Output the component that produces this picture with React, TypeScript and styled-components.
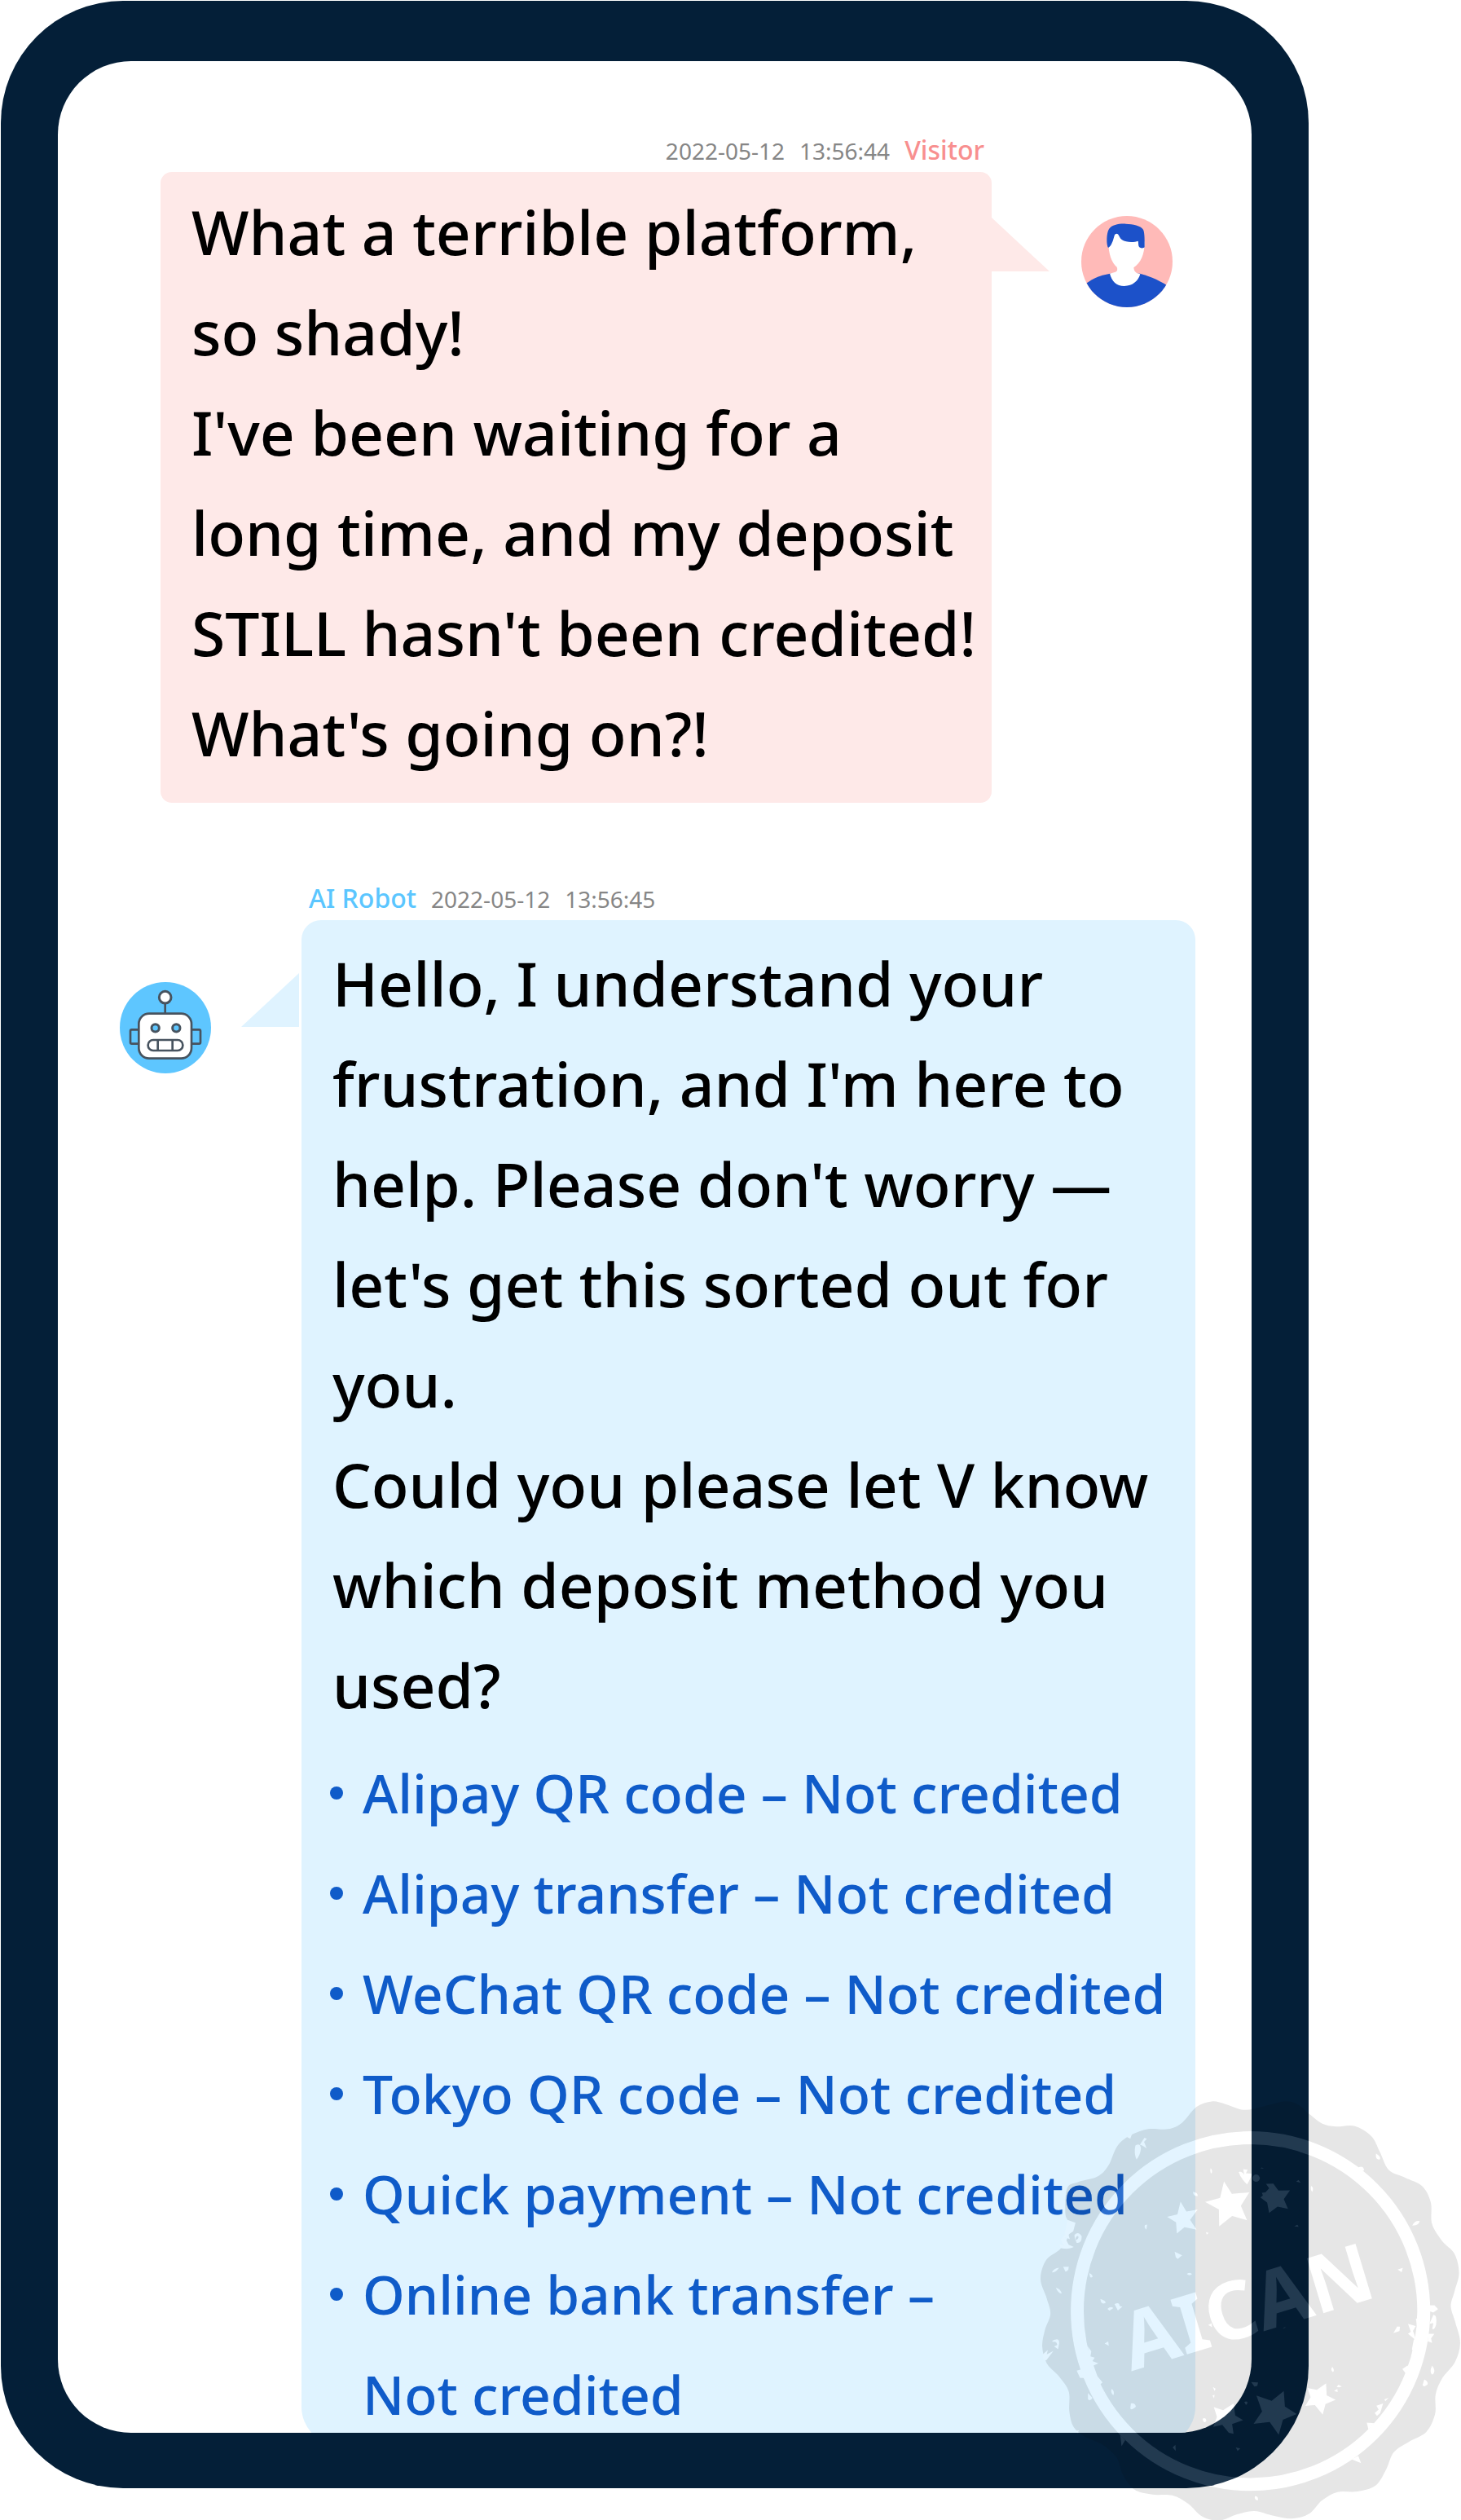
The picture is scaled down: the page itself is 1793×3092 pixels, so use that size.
import React from "react";
import styled, { createGlobalStyle } from "styled-components";

const GlobalStyle = createGlobalStyle`
  *, *::before, *::after { box-sizing: border-box; }
  body { margin: 0; background: #ffffff; }
`;

const Page = styled.main`
  position: relative;
  padding: 1px 187px 39px 1px;
  overflow: hidden;
  font-family: "Noto Sans", "Open Sans", sans-serif;
  font-weight: 500;
`;

const Phone = styled.section`
  padding: 74px 70px 68px;
  border-radius: 150px;
  background: #041f38;
`;

const Screen = styled.div`
  display: flex;
  flex-direction: column;
  gap: 97px;
  padding-top: 89px;
  border-radius: 90px;
  background: #ffffff;
  overflow: hidden;
`;

type Side = "visitor" | "robot";

const Message = styled.article<{ $side: Side }>`
  display: flex;
  flex-direction: ${(p) => (p.$side === "visitor" ? "row" : "row-reverse")};
  align-items: flex-start;
  gap: ${(p) => (p.$side === "visitor" ? 110 : 111)}px;
  padding: ${(p) => (p.$side === "visitor" ? "0 97px 0 126px" : "0 69px 0 76px")};
  margin-bottom: ${(p) => (p.$side === "robot" ? -16 : 0)}px;
`;

const Body = styled.div`
  flex: 1;
  min-width: 0;
`;

const Meta = styled.header<{ $side: Side }>`
  display: flex;
  align-items: baseline;
  justify-content: ${(p) => (p.$side === "visitor" ? "flex-end" : "flex-start")};
  gap: 18px;
  height: 40px;
  margin-bottom: 7px;
  padding: 0 9px;
  line-height: 40px;
  white-space: nowrap;
`;

const Stamped = styled.time`
  color: #868686;
  font-size: 28px;
  font-weight: 400;
`;

const Sender = styled.strong<{ $side: Side }>`
  color: ${(p) => (p.$side === "visitor" ? "#f88f8f" : "#5bc6ff")};
  font-size: 32px;
  font-weight: 500;
`;

const Bubble = styled.div<{ $side: Side }>`
  position: relative;
  padding: ${(p) => (p.$side === "visitor" ? "12px 0 24px" : "16px 0 2px")};
  border-radius: ${(p) => (p.$side === "visitor" ? "14px" : "24px 24px 48px 48px")};
  background: ${(p) => (p.$side === "visitor" ? "#fee9e8" : "#dff3ff")};

  &::before {
    content: "";
    position: absolute;
    top: ${(p) => (p.$side === "visitor" ? 56 : 65)}px;
    ${(p) => (p.$side === "visitor" ? "left: 100%;" : "right: calc(100% + 3px);")}
    width: 71px;
    height: 66px;
    background: inherit;
    clip-path: ${(p) =>
      p.$side === "visitor" ? "polygon(0 0, 100% 100%, 0 100%)" : "polygon(100% 0, 100% 100%, 0 100%)"};
  }
`;

const Words = styled.p`
  margin: 0;
  padding-left: 38px;
  color: #000000;
  font-size: 75px;
  line-height: 123px;
  white-space: nowrap;
`;

const Line = styled.span`
  display: block;
`;

const Options = styled.ul`
  margin: 9px 0 0;
  padding: 0 0 0 35px;
  list-style: none;
`;

const Option = styled.li`
  display: flex;
  align-items: flex-start;
  gap: 24px;

  &::before {
    content: "";
    flex: none;
    width: 16px;
    height: 16px;
    margin-top: 54px;
    border-radius: 50%;
    background: #0f5bc9;
  }
`;

const OptionLink = styled.a`
  color: #0f5bc9;
  font-size: 66px;
  line-height: 123px;
  text-decoration: none;
  white-space: nowrap;
`;

const Avatar = styled.svg<{ $side: Side }>`
  flex: none;
  width: 112px;
  height: 112px;
  margin-top: ${(p) => (p.$side === "visitor" ? 101 : 123)}px;
`;

const Seal = styled.svg`
  position: absolute;
  right: 0;
  bottom: 0;
  width: 543px;
  height: 542px;
  pointer-events: none;
`;

const SealText = styled.text`
  font-family: "Noto Sans", "Open Sans", sans-serif;
  font-size: 284px;
  font-weight: 700;
`;

function VisitorAvatar() {
  return (
    <Avatar $side="visitor" viewBox="0 0 336 336" role="img" aria-label="Visitor">
      <defs>
        <clipPath id="visitor-disc">
          <circle cx="168" cy="168" r="168" />
        </clipPath>
      </defs>
      <g clipPath="url(#visitor-disc)">
        <rect width="336" height="336" fill="#ffbab8" />
        <path d="M0 262C35 232 68 218 106 212H216C260 224 290 238 336 268V336H0Z" fill="#1c51c9" />
        <path
          d="M100 95C100 140 112 172 131 188C134 196 133 203 126 206L105 212C112 240 130 258 158 258C190 258 210 238 217 214C200 211 194 203 193 190C218 172 233 145 233 95L200 50H125Z"
          fill="#ffffff"
        />
        <path
          d="M99 117C92 108 92 62 102 48C114 32 138 28 164 29C190 30 218 35 228 50C234 62 233 96 233 115C228 120 217 119 213 114C209 108 211 98 209 92C196 97 165 98 150 88C142 82 139 72 136 68C131 63 125 65 122 72C118 88 111 112 99 117Z"
          fill="#1c51c9"
        />
      </g>
    </Avatar>
  );
}

function RobotAvatar() {
  return (
    <Avatar $side="robot" viewBox="0 0 336 336" role="img" aria-label="AI Robot">
      <circle cx="168" cy="168" r="168" fill="#5ec6ff" />
      <g stroke="#47535f" strokeWidth="8" fill="none">
        <rect x="39" y="175" width="36" height="52" rx="5" />
        <rect x="261" y="175" width="36" height="52" rx="5" />
        <path d="M167 78V116" />
        <circle cx="167" cy="56" r="22" fill="#ffffff" strokeWidth="9" />
        <rect x="70" y="116" width="194" height="165" rx="38" fill="#ffffff" />
        <circle cx="131" cy="169" r="14" fill="#5ec6ff" strokeWidth="9" />
        <circle cx="208" cy="169" r="14" fill="#5ec6ff" strokeWidth="9" />
        <rect x="104" y="213" width="128" height="39" rx="19" />
        <path d="M140 213V252M194 213V252" />
      </g>
    </Avatar>
  );
}

type Point = [number, number];

/* Closed Catmull-Rom curve through the points, written as cubic Béziers. */
function smoothLoop(points: Point[]): string {
  const n = points.length;
  const at = (i: number) => points[(i + n) % n];
  let d = `M${points[0][0]} ${points[0][1]}`;
  for (let i = 0; i < n; i += 1) {
    const [a, b, c, e] = [at(i - 1), at(i), at(i + 1), at(i + 2)];
    d += `C${b[0] + (c[0] - a[0]) / 6} ${b[1] + (c[1] - a[1]) / 6} ${c[0] - (e[0] - b[0]) / 6} ${
      c[1] - (e[1] - b[1]) / 6
    } ${c[0]} ${c[1]}`;
  }
  return `${d}Z`;
}

const SCALLOP: Point[] = [
  [78, 712], [97, 645], [148, 605], [176, 560], [180, 515], [166, 480], [172, 390], [210, 368], [280, 348], [318, 310],
  [350, 240], [395, 203], [460, 180], [530, 180], [580, 157], [630, 102], [685, 82], [735, 92], [800, 112],
  [865, 100], [940, 82], [990, 92], [1032, 128], [1075, 160], [1125, 171], [1190, 169], [1250, 205], [1280, 260],
  [1312, 325], [1370, 352], [1430, 382], [1461, 440], [1465, 515], [1500, 575], [1545, 622], [1561, 690],
  [1545, 755], [1532, 808], [1548, 865], [1565, 938], [1547, 1005], [1502, 1062], [1478, 1120], [1476, 1190],
  [1445, 1253], [1385, 1287], [1330, 1325], [1303, 1385], [1265, 1443], [1200, 1464], [1130, 1466], [1075, 1496],
  [1030, 1543], [970, 1560], [900, 1549], [837, 1533], [775, 1545], [711, 1567], [650, 1552], [602, 1508],
  [545, 1478], [475, 1475], [410, 1457], [370, 1405], [348, 1345], [300, 1300], [235, 1270], [195, 1235],
  [180, 1180], [178, 1110], [145, 1058], [100, 1010], [84, 950], [94, 890], [113, 835], [100, 780],
];

const STARS = [
  "574,437 595,472 635,465 608,502 631,536 588,528 561,550 558,510 526,491 563,482",
  "728,365 756,409 818,404 788,452 810,503 757,488 711,525 710,465 661,438 714,424",
  "877,374 903,373 921,398 962,397 940,428 955,463 918,455 888,477 881,440 857,422 866,415 862,406 875,404 888,390",
  "692,1165 725,1176 762,1152 768,1195 796,1211 757,1225 762,1260 745,1256 722,1228 690,1235 703,1200",
  "940,1108 944,1163 986,1190 937,1210 922,1263 890,1218 833,1224 863,1180 843,1124 897,1143",
  "1024,1097 1057,1104 1090,1081 1092,1123 1124,1139 1088,1154 1078,1192 1050,1158 1016,1161 1035,1130",
];

const CHIPS = [
  "M414 238Q432 228 434 250Q430 275 418 288Q408 265 414 238Z",
  "M430 235L446 211L455 214L445 225L454 248L438 238Z",
  "M384 208L402 198L396 214Z",
  "M618 402Q636 405 635 417Q620 420 618 402Z",
  "M681 318Q690 328 683 338Q677 330 681 318Z",
  "M780 332Q790 326 800 342L796 322L812 324L806 336L826 338Q828 345 810 376Q786 354 780 332Z",
  "M857 319L862 316L870 320Z",
  "M984 366L992 360L1000 370Z",
  "M1037 381Q1048 388 1041 403Q1033 394 1037 381Z",
  "M1267 266Q1288 280 1279 289Q1262 286 1267 266Z",
  "M1395 522Q1405 502 1422 506Q1418 522 1395 522Z",
  "M664 545L674 548L667 554Z",
  "M448 520L456 518L453 536Q444 530 448 520Z",
  "M977 525L988 519L993 526Z",
  "M553 614L580 627L564 640L557 634Z",
  "M596 693Q608 685 615 694Q605 702 596 693Z",
  "M1343 678L1362 671L1358 687Z",
  "M174 502L202 512L194 542L174 556L164 550Z",
  "M198 555Q212 540 224 560Q224 586 206 583L202 573Q214 570 212 560Q204 556 200 574Z",
  "M174 545L182 570L163 562L178 590L196 598Q180 608 150 602L146 588L160 592L150 572Z",
  "M118 688Q124 672 144 671Q132 688 118 688Z",
  "M158 668L178 668Q178 684 166 685Z",
  "M132 741Q150 746 153 763Q140 762 132 741Z",
  "M251 690Q264 696 262 704Q252 712 251 690Z",
  "M290 782Q312 790 308 796Q292 804 290 782Z",
  "M315 817Q326 806 336 814L322 824Z",
  "M340 800Q358 792 358 806L368 809L352 823Z",
  "M305 940L318 932L320 948Z",
  "M120 930Q146 916 144 940L140 960L126 950L137 945Q136 930 120 934Z",
  "M86 978L104 962L100 978L124 966L98 1000L88 996Z",
  "M206 1036L225 1030L236 1062L218 1062Z",
  "M246 950L258 967L255 985L270 990L262 1002L283 1010L266 1018L280 1056L298 1078L288 1086L250 1020Z",
  "M246 1115L262 1132Q256 1145 246 1138Z",
  "M330 1100Q342 1108 336 1123Q324 1114 330 1100Z",
  "M398 1152Q414 1150 416 1164Q402 1178 396 1170Z",
  "M202 1250L214 1247L210 1257Z",
  "M360 1262L378 1282L365 1304Z",
  "M546 1308L556 1299L557 1320Z",
  "M770 1308L786 1312L776 1320Z",
  "M689 1094L699 1100L694 1108Z",
  "M687 1124L695 1122L693 1134Z",
  "M652 1206Q664 1200 666 1214Q656 1226 652 1206Z",
  "M800 1147Q810 1142 812 1150L806 1158Z",
  "M824 1076L849 1078L846 1090L836 1092Z",
  "M1112 1022Q1122 1036 1114 1041Q1104 1034 1112 1022Z",
  "M1127 1094L1134 1086L1146 1092L1136 1095Z",
  "M1118 1108L1130 1100L1131 1112Z",
  "M1466 1018Q1482 1040 1466 1050Q1454 1040 1466 1018Z",
  "M1438 1067Q1452 1074 1450 1084Q1434 1098 1432 1086Z",
  "M1458 804L1474 804L1487 818L1470 830L1458 826Z",
  "M1470 838Q1484 836 1480 872Q1474 894 1466 888L1470 868L1456 870Z",
  "M1328 903L1342 879L1352 880L1350 896Z",
  "M1408 852L1416 900L1400 928L1394 960L1420 990L1424 850Z",
  "M1380 870L1408 878L1398 895L1410 930L1380 905L1390 898Z",
  "M1452 905L1474 905L1462 922L1466 938L1450 932Z",
  "M1360 1030L1378 1018L1390 1030L1374 1048Z",
  "M1296 1138L1312 1132L1300 1144Z",
  "M1268 1160L1292 1152L1282 1186L1270 1196L1262 1186L1276 1174Z",
  "M1234 1220L1262 1222L1240 1245Z",
  "M1180 1350L1204 1338L1214 1364Z",
  "M1204 316Q1222 308 1225 326L1212 330Z",
  "M838 1480Q852 1482 848 1496Q834 1494 838 1480Z",
  "M672 874L684 868L686 882Z",
  "M936 887L942 882L948 883Z",
];

function AicanSeal() {
  return (
    <Seal viewBox="0 0 1568 1565" role="img" aria-label="AICAN">
      <defs>
        {/* Black becomes a faint shade and white a faint tint of what lies beneath. */}
        <filter
          id="watermark"
          filterUnits="userSpaceOnUse"
          x="0"
          y="0"
          width="1568"
          height="1568"
          colorInterpolationFilters="sRGB"
        >
          <feColorMatrix values="1 0 0 0 0  0 1 0 0 0  0 0 1 0 0  0.02 0 0 0.1 0" />
        </filter>
      </defs>
      <g filter="url(#watermark)">
        <path d={smoothLoop(SCALLOP)} fill="#000000" />
        <g fill="#ffffff">
          <circle cx="822" cy="825" r="614" fill="none" stroke="#ffffff" strokeWidth="46" />
          {STARS.map((points) => (
            <polygon key={points} points={points} />
          ))}
          {CHIPS.map((d) => (
            <path key={d} d={d} />
          ))}
          <circle cx="842" cy="354" r="13" />
          <SealText x="400" y="1038" transform="rotate(-16.8 400 1038)">
            AICAN
          </SealText>
        </g>
      </g>
    </Seal>
  );
}

const VISITOR_LINES = [
  "What a terrible platform,",
  "so shady!",
  "I've been waiting for a",
  "long time, and my deposit",
  "STILL hasn't been credited!",
  "What's going on?!",
];

const ROBOT_LINES = [
  "Hello, I understand your",
  "frustration, and I'm here to",
  "help. Please don't worry —",
  "let's get this sorted out for",
  "you.",
  "Could you please let V know",
  "which deposit method you",
  "used?",
];

const OPTIONS = [
  ["Alipay QR code – Not credited"],
  ["Alipay transfer – Not credited"],
  ["WeChat QR code – Not credited"],
  ["Tokyo QR code – Not credited"],
  ["Quick payment – Not credited"],
  ["Online bank transfer –", "Not credited"],
];

const renderLines = (lines: string[]) => lines.map((line) => <Line key={line}>{line}</Line>);

export default function App() {
  return (
    <Page>
      <GlobalStyle />
      <Phone>
        <Screen>
          <Message $side="visitor">
            <Body>
              <Meta $side="visitor">
                <Stamped>2022-05-12</Stamped>
                <Stamped>13:56:44</Stamped>
                <Sender $side="visitor">Visitor</Sender>
              </Meta>
              <Bubble $side="visitor">
                <Words>{renderLines(VISITOR_LINES)}</Words>
              </Bubble>
            </Body>
            <VisitorAvatar />
          </Message>
          <Message $side="robot">
            <Body>
              <Meta $side="robot">
                <Sender $side="robot">AI Robot</Sender>
                <Stamped>2022-05-12</Stamped>
                <Stamped>13:56:45</Stamped>
              </Meta>
              <Bubble $side="robot">
                <Words>{renderLines(ROBOT_LINES)}</Words>
                <Options>
                  {OPTIONS.map((lines) => (
                    <Option key={lines[0]}>
                      <OptionLink href="#deposit">{renderLines(lines)}</OptionLink>
                    </Option>
                  ))}
                </Options>
              </Bubble>
            </Body>
            <RobotAvatar />
          </Message>
        </Screen>
      </Phone>
      <AicanSeal />
    </Page>
  );
}
